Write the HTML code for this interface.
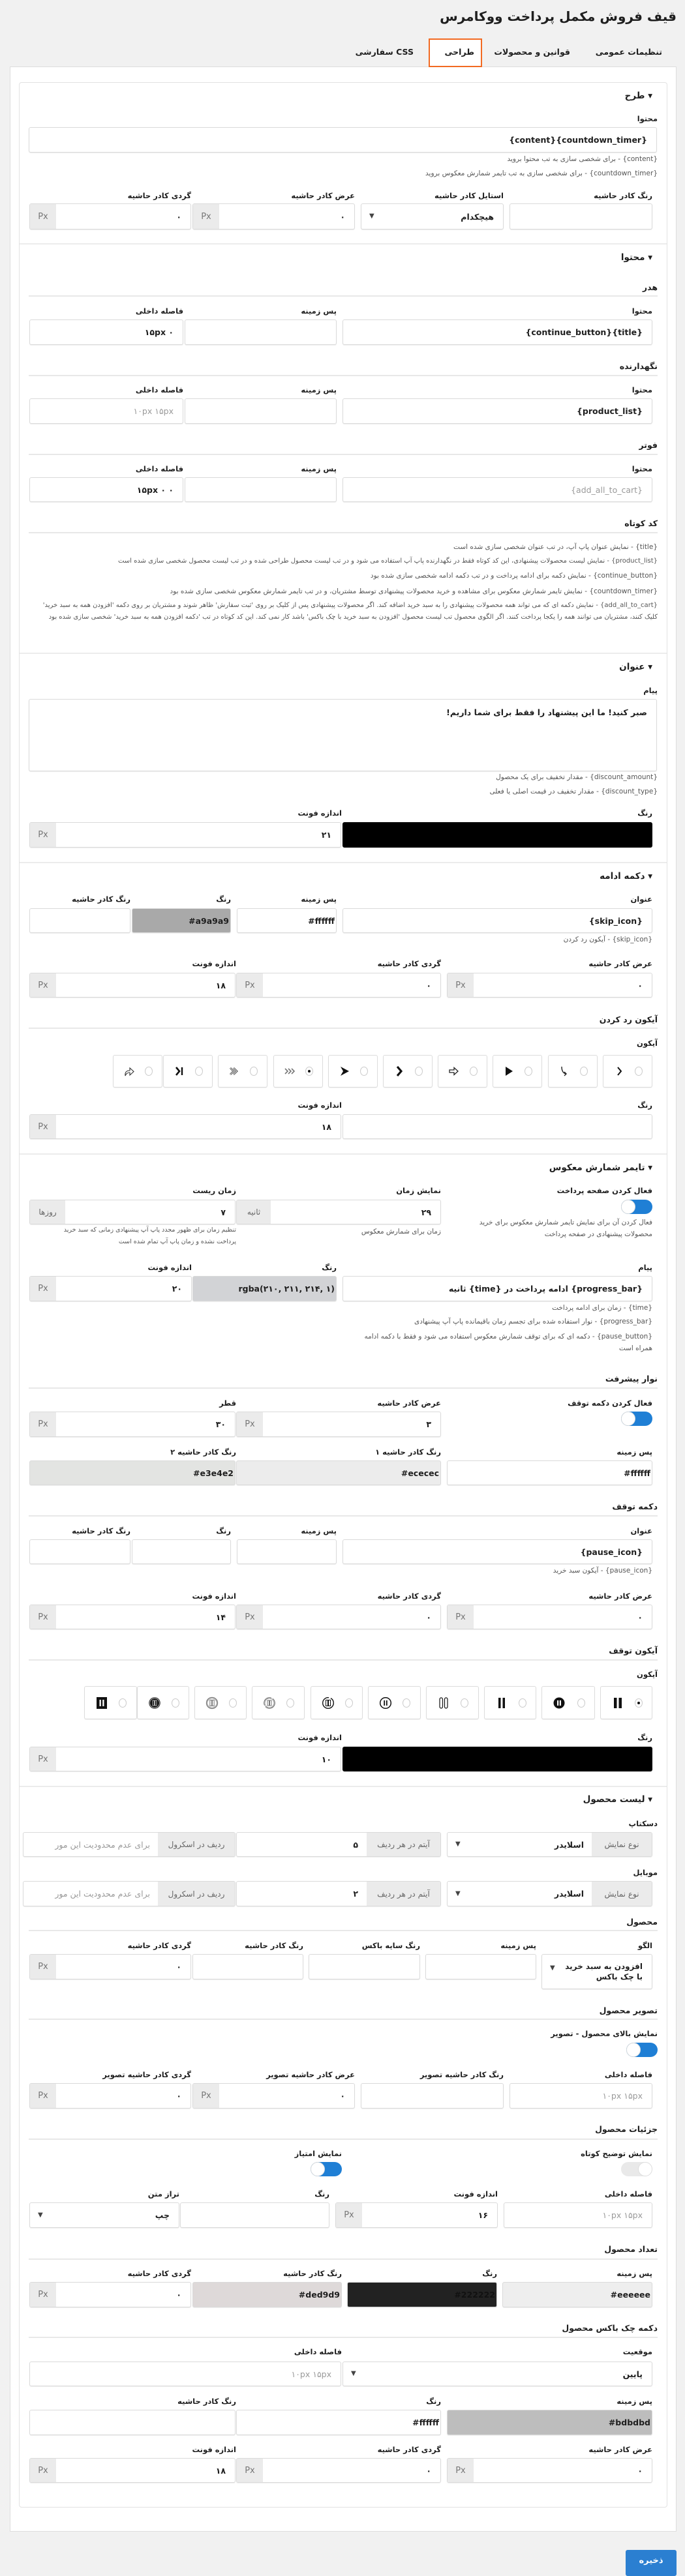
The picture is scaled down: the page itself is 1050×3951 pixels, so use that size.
<!DOCTYPE html>
<html lang="fa" dir="rtl"><head><meta charset="utf-8">
<style>
html,body{margin:0;padding:0}
body{width:1050px;height:3944px;background:#f1f1f1;position:relative;overflow:hidden;font-family:"DejaVu Sans","Liberation Sans",sans-serif;direction:rtl;color:#1e1e1e}
.a{position:absolute}
.t{position:absolute;white-space:nowrap;font-size:11.5px;font-weight:bold;line-height:18px}
.h{position:absolute;white-space:nowrap;font-size:13.5px;font-weight:bold;line-height:20px;right:50px}
.s{position:absolute;white-space:nowrap;font-size:12.5px;font-weight:bold;line-height:18px;right:42px}
.d{position:absolute;white-space:nowrap;font-size:10.5px;color:#555;line-height:16px}
.ln{position:absolute;left:44px;width:964px;height:2px;background:#e8e8e8}
.sep{position:absolute;left:30px;width:992px;height:2px;background:#ececec}
.f{position:absolute;box-sizing:border-box;border:1px solid #dadada;border-radius:3px;background:#fff;box-shadow:0 1px 1px rgba(0,0,0,.07);font-size:12.5px;font-weight:bold;padding-right:14px;display:flex;align-items:center;justify-content:flex-start;white-space:nowrap;overflow:hidden}
.v{direction:ltr;unicode-bidi:isolate}
.ph{color:#9a9a9a;font-weight:normal}
.px{position:absolute;left:0;top:0;bottom:0;width:40px;background:#ebebeb;color:#777;font-weight:normal;font-size:13px;display:flex;align-items:center;justify-content:center;direction:ltr}
.ad{position:absolute;top:0;bottom:0;background:#ebebeb;color:#666;font-weight:normal;font-size:12px;display:flex;align-items:center;justify-content:center}
.ar{position:absolute;left:12px;top:50%;margin-top:-7px;font-size:10px;color:#444;line-height:14px}
.tg{position:absolute;width:48px;height:22px;border-radius:11px;background:#1f7fd5}
.tg::before{content:"";position:absolute;left:0;top:0;width:20px;height:20px;border-radius:50%;background:#fff;border:1px solid #ddd}
.tg.off{background:#e9e9e9}
.tg.off::before{left:auto;right:0}
.ib{position:absolute;box-sizing:border-box;border:1px solid #dcdcdc;border-radius:3px;background:#fff;box-shadow:0 1px 1px rgba(0,0,0,.06)}
.ib svg.i{position:absolute;top:50%;margin-top:-10px;width:20px;height:20px}
.ib .r{position:absolute;top:50%;margin-top:-7px;width:12px;height:14px;border-radius:50%;border:1px solid #ccc;box-sizing:border-box;background:#fff}
.ib .r.on::after{content:"";position:absolute;left:3px;top:4px;width:4px;height:4px;border-radius:50%;background:#111}
</style></head><body>

<div class="a" style="right:13px;top:10px;font-size:20px;font-weight:bold;line-height:30px">قیف فروش مکمل پرداخت ووکامرس</div>

<div class="a" style="left:15px;top:102px;width:1022px;height:1px;background:#ddd"></div>
<div class="a" style="left:657px;top:59px;width:82px;height:44px;box-sizing:border-box;border:2px solid #f26a22;background:#fff"></div>
<div class="t" style="right:35px;top:71px;font-size:12.5px">تنظیمات عمومی</div>
<div class="t" style="right:176px;top:71px;font-size:12.5px">قوانین و محصولات</div>
<div class="t" style="right:323px;top:71px;font-size:12.5px">طراحی</div>
<div class="t" style="right:416px;top:71px;font-size:12.5px">CSS سفارشی</div>

<div class="a" style="left:15px;top:103px;width:1022px;height:3780px;background:#fff;border:1px solid #ddd;box-sizing:border-box;border-top:none"></div>
<div class="a" style="left:29px;top:126px;width:994px;height:3720px;border:1px solid #e2e2e2;border-radius:4px;box-sizing:border-box"></div>

<!-- طرح -->
<div class="h" style="top:137px">▾ طرح</div>
<div class="s" style="top:173px;font-size:11.5px">محتوا</div>
<div class="f" style="left:44px;top:195px;width:963px;height:39px"><span class="v">{content}{countdown_timer}</span></div>
<div class="d" style="right:42px;top:236px">{content} - برای شخصی سازی به تب محتوا بروید</div>
<div class="d" style="right:42px;top:258px">{countdown_timer} - برای شخصی سازی به تب تایمر شمارش معکوس بروید</div>
<div class="t" style="right:50px;top:291px">رنگ کادر حاشیه</div>
<div class="t" style="right:278px;top:291px">استایل کادر حاشیه</div>
<div class="t" style="right:506px;top:291px">عرض کادر حاشیه</div>
<div class="t" style="right:757px;top:291px">گردی کادر حاشیه</div>
<div class="f" style="left:781px;top:312px;width:219px;height:40px"></div>
<div class="f" style="left:553px;top:312px;width:219px;height:40px">هیچکدام<span class="ar">▼</span></div>
<div class="f" style="left:295px;top:312px;width:249px;height:40px">۰<span class="px">Px</span></div>
<div class="f" style="left:45px;top:312px;width:248px;height:40px">۰<span class="px">Px</span></div>

<div class="sep" style="top:373px"></div>
<!-- محتوا -->
<div class="h" style="top:385px">▾ محتوا</div>
<div class="s" style="top:432px">هدر</div><div class="ln" style="top:453px"></div>
<div class="t" style="right:50px;top:468px">محتوا</div>
<div class="t" style="right:534px;top:468px">پس زمینه</div>
<div class="t" style="right:769px;top:468px">فاصله داخلی</div>
<div class="f" style="left:525px;top:490px;width:475px;height:39px"><span class="v">{continue_button}{title}</span></div>
<div class="f" style="left:283px;top:490px;width:233px;height:39px"></div>
<div class="f" style="left:45px;top:490px;width:236px;height:39px"><span class="v">۱۵px ۰</span></div>

<div class="s" style="top:553px">نگهدارنده</div><div class="ln" style="top:575px"></div>
<div class="t" style="right:50px;top:589px">محتوا</div>
<div class="t" style="right:534px;top:589px">پس زمینه</div>
<div class="t" style="right:769px;top:589px">فاصله داخلی</div>
<div class="f" style="left:525px;top:611px;width:475px;height:39px"><span class="v">{product_list}</span></div>
<div class="f" style="left:283px;top:611px;width:233px;height:39px"></div>
<div class="f" style="left:45px;top:611px;width:236px;height:39px"><span class="ph v">۱۰px ۱۵px</span></div>

<div class="s" style="top:674px">فوتر</div><div class="ln" style="top:696px"></div>
<div class="t" style="right:50px;top:710px">محتوا</div>
<div class="t" style="right:534px;top:710px">پس زمینه</div>
<div class="t" style="right:769px;top:710px">فاصله داخلی</div>
<div class="f" style="left:525px;top:732px;width:475px;height:38px"><span class="ph v">{add_all_to_cart}</span></div>
<div class="f" style="left:283px;top:732px;width:233px;height:38px"></div>
<div class="f" style="left:45px;top:732px;width:236px;height:38px"><span class="v">۱۵px ۰ ۰</span></div>

<div class="s" style="top:794px">کد کوتاه</div><div class="ln" style="top:816px"></div>
<div class="d" style="right:42px;top:831px">{title} - نمایش عنوان پاپ آپ، در تب عنوان شخصی سازی شده است</div>
<div class="d" style="right:42px;top:853px;font-size:10px">{product_list} - نمایش لیست محصولات پیشنهادی، این کد کوتاه فقط در نگهدارنده پاپ آپ استفاده می شود و در تب لیست محصول طراحی شده و در تب لیست محصول شخصی سازی شده است</div>
<div class="d" style="right:42px;top:875px">{continue_button} - نمایش دکمه برای ادامه پرداخت و در تب دکمه ادامه شخصی سازی شده بود</div>
<div class="d" style="right:42px;top:899px">{countdown_timer} - نمایش تایمر شمارش معکوس برای مشاهده و خرید محصولات پیشنهادی توسط مشتریان، و در تب تایمر شمارش معکوس شخصی سازی شده بود</div>
<div class="d" style="right:42px;top:920px;width:964px;white-space:normal;line-height:18px;font-size:10px">{add_all_to_cart} - نمایش دکمه ای که می تواند همه محصولات پیشنهادی را به سبد خرید اضافه کند. اگر محصولات پیشنهادی پس از کلیک بر روی 'ثبت سفارش' ظاهر شوند و مشتریان بر روی دکمه 'افزودن همه به سبد خرید' کلیک کنند، مشتریان می توانند همه را یکجا پرداخت کنند. اگر الگوی محصول تب لیست محصول 'افزودن به سبد خرید با چک باکس' باشد کار نمی کند. این کد کوتاه در تب 'دکمه افزودن همه به سبد خرید' شخصی سازی شده بود</div>

<div class="sep" style="top:1001px"></div>
<!-- عنوان -->
<div class="h" style="top:1013px">▾ عنوان</div>
<div class="s" style="top:1050px;font-size:11.5px">پیام</div>
<div class="f" style="left:44px;top:1072px;width:963px;height:111px;align-items:flex-start;padding-top:12px">صبر کنید! ما این پیشنهاد را فقط برای شما داریم!</div>
<div class="d" style="right:42px;top:1184px">{discount_amount} - مقدار تخفیف برای یک محصول</div>
<div class="d" style="right:42px;top:1206px">{discount_type} - مقدار تخفیف در قیمت اصلی یا فعلی</div>
<div class="t" style="right:50px;top:1238px">رنگ</div>
<div class="t" style="right:526px;top:1238px">اندازه فونت</div>
<div class="f" style="left:525px;top:1261px;width:475px;height:39px;background:#000;border-color:#000"></div>
<div class="f" style="left:45px;top:1261px;width:478px;height:39px">۲۱<span class="px">Px</span></div>

<div class="sep" style="top:1322px"></div>
<!-- دکمه ادامه -->
<div class="h" style="top:1334px">▾ دکمه ادامه</div>
<div class="t" style="right:50px;top:1370px">عنوان</div>
<div class="t" style="right:534px;top:1370px">پس زمینه</div>
<div class="t" style="right:696px;top:1370px">رنگ</div>
<div class="t" style="right:850px;top:1370px">رنگ کادر حاشیه</div>
<div class="f" style="left:525px;top:1393px;width:475px;height:38px"><span class="v">{skip_icon}</span></div>
<div class="f" style="left:363px;top:1393px;width:153px;height:38px;padding-right:2px"><span class="v">#ffffff</span></div>
<div class="f" style="left:202px;top:1393px;width:152px;height:38px;padding-right:2px;background:#a9a9a9"><span class="v">#a9a9a9</span></div>
<div class="f" style="left:45px;top:1393px;width:155px;height:38px"></div>
<div class="d" style="right:50px;top:1433px">{skip_icon} - آیکون رد کردن</div>
<div class="t" style="right:50px;top:1469px">عرض کادر حاشیه</div>
<div class="t" style="right:374px;top:1469px">گردی کادر حاشیه</div>
<div class="t" style="right:688px;top:1469px">اندازه فونت</div>
<div class="f" style="left:685px;top:1492px;width:315px;height:38px">۰<span class="px">Px</span></div>
<div class="f" style="left:362px;top:1492px;width:314px;height:38px">۰<span class="px">Px</span></div>
<div class="f" style="left:45px;top:1492px;width:316px;height:38px">۱۸<span class="px">Px</span></div>

<div class="s" style="top:1555px">آیکون رد کردن</div><div class="ln" style="top:1576px"></div>
<div class="s" style="top:1591px;font-size:11.5px">آیکون</div>

<div class="ib" style="left:924px;top:1618px;width:76px;height:50px"><svg class="i" style="left:14px" viewBox="0 0 20 20"><path d="M8 4 L13 10 L8 16" stroke="#111" stroke-width="2" fill="none"/></svg><span class="r" style="left:48px"></span></div>
<div class="ib" style="left:840px;top:1618px;width:76px;height:50px"><svg class="i" style="left:14px" viewBox="0 0 20 20"><path d="M6 3 Q6 12 12 14 M10 11 L13 14 L10 17" stroke="#222" stroke-width="1.4" fill="none"/></svg><span class="r" style="left:48px"></span></div>
<div class="ib" style="left:755px;top:1618px;width:76px;height:50px"><svg class="i" style="left:14px" viewBox="0 0 20 20"><path d="M5 3 L16 10 L5 17 Z" fill="#111"/></svg><span class="r" style="left:48px"></span></div>
<div class="ib" style="left:671px;top:1618px;width:76px;height:50px"><svg class="i" style="left:14px" viewBox="0 0 20 20"><path d="M3 8 H10 V4.5 L16 10 L10 15.5 V12 H3 Z" stroke="#222" stroke-width="1.3" fill="none"/></svg><span class="r" style="left:48px"></span></div>
<div class="ib" style="left:587px;top:1618px;width:76px;height:50px"><svg class="i" style="left:14px" viewBox="0 0 20 20"><path d="M7 3 L13 10 L7 17" stroke="#111" stroke-width="3.2" fill="none"/></svg><span class="r" style="left:48px"></span></div>
<div class="ib" style="left:503px;top:1618px;width:76px;height:50px"><svg class="i" style="left:14px" viewBox="0 0 20 20"><path d="M4 3 L17 10 L4 17 L8 10 Z" fill="#111"/></svg><span class="r" style="left:48px"></span></div>
<div class="ib" style="left:419px;top:1618px;width:76px;height:50px"><svg class="i" style="left:14px" viewBox="0 0 20 20"><path d="M3 6 L7 10 L3 14 M8 6 L12 10 L8 14 M13 6 L17 10 L13 14" stroke="#777" stroke-width="1.6" fill="none"/></svg><span class="r on" style="left:48px"></span></div>
<div class="ib" style="left:334px;top:1618px;width:76px;height:50px"><svg class="i" style="left:14px" viewBox="0 0 20 20"><path d="M4 5 L9 10 L4 15 M9 5 L14 10 L9 15" stroke="#222" stroke-width="2.6" fill="none"/><path d="M4 5 L9 10 L4 15 M9 5 L14 10 L9 15" stroke="#fff" stroke-width="1" fill="none"/></svg><span class="r" style="left:48px"></span></div>
<div class="ib" style="left:250px;top:1618px;width:76px;height:50px"><svg class="i" style="left:14px" viewBox="0 0 20 20"><path d="M5 4 L10 10 L5 16" stroke="#111" stroke-width="2.6" fill="none"/><path d="M14 4 V16" stroke="#111" stroke-width="2.4"/></svg><span class="r" style="left:48px"></span></div>
<div class="ib" style="left:173px;top:1618px;width:76px;height:50px"><svg class="i" style="left:14px" viewBox="0 0 20 20"><path d="M4 17 Q3 9 11 9 V5 L17 10.5 L11 16 V12 Q6 12 4 17 Z" stroke="#333" stroke-width="1.1" fill="none"/></svg><span class="r" style="left:48px"></span></div>

<div class="t" style="right:50px;top:1686px">رنگ</div>
<div class="t" style="right:526px;top:1686px">اندازه فونت</div>
<div class="f" style="left:525px;top:1709px;width:475px;height:38px"></div>
<div class="f" style="left:45px;top:1709px;width:478px;height:38px">۱۸<span class="px">Px</span></div>

<div class="sep" style="top:1769px"></div>
<!-- تایمر -->
<div class="h" style="top:1781px">▾ تایمر شمارش معکوس</div>
<div class="t" style="right:50px;top:1817px">فعال کردن صفحه پرداخت</div>
<div class="t" style="right:374px;top:1817px">نمایش زمان</div>
<div class="t" style="right:688px;top:1817px">زمان ریست</div>
<div class="tg" style="left:952px;top:1840px"></div>
<div class="f" style="left:362px;top:1840px;width:314px;height:38px">۲۹<span class="ad" style="left:0;width:52px">ثانیه</span></div>
<div class="f" style="left:45px;top:1840px;width:316px;height:38px">۷<span class="ad" style="left:0;width:54px">روزها</span></div>
<div class="d" style="right:50px;top:1867px">فعال کردن آن برای نمایش تایمر شمارش معکوس برای خرید</div>
<div class="d" style="right:50px;top:1885px">محصولات پیشنهادی در صفحه پرداخت</div>
<div class="d" style="right:374px;top:1881px">زمان برای شمارش معکوس</div>
<div class="d" style="right:688px;top:1879px;font-size:9.5px">تنظیم زمان برای ظهور مجدد پاپ آپ پیشنهادی زمانی که سبد خرید</div>
<div class="d" style="right:688px;top:1897px;font-size:9.5px">پرداخت نشده و زمان پاپ آپ تمام شده است</div>
<div class="t" style="right:50px;top:1935px">پیام</div>
<div class="t" style="right:534px;top:1935px">رنگ</div>
<div class="t" style="right:756px;top:1935px">اندازه فونت</div>
<div class="f" style="left:525px;top:1957px;width:475px;height:39px">{progress_bar} ادامه پرداخت در {time} ثانیه</div>
<div class="f" style="left:295px;top:1957px;width:221px;height:39px;padding-right:2px;background:#d2d3d6"><span class="v">rgba(۲۱۰, ۲۱۱, ۲۱۴, ۱)</span></div>
<div class="f" style="left:45px;top:1957px;width:249px;height:39px">۲۰<span class="px">Px</span></div>
<div class="d" style="right:50px;top:1998px">{time} - زمان برای ادامه پرداخت</div>
<div class="d" style="right:50px;top:2019px">{progress_bar} - نوار استفاده شده برای تجسم زمان باقیمانده پاپ آپ پیشنهادی</div>
<div class="d" style="right:50px;top:2042px">{pause_button} - دکمه ای که برای توقف شمارش معکوس استفاده می شود و فقط با دکمه ادامه</div>
<div class="d" style="right:50px;top:2060px">همراه است</div>

<div class="s" style="top:2106px">نوار پیشرفت</div><div class="ln" style="top:2128px"></div>
<div class="t" style="right:50px;top:2143px">فعال کردن دکمه توقف</div>
<div class="t" style="right:374px;top:2143px">عرض کادر حاشیه</div>
<div class="t" style="right:688px;top:2143px">قطر</div>
<div class="tg" style="left:952px;top:2165px"></div>
<div class="f" style="left:362px;top:2165px;width:314px;height:39px">۳<span class="px">Px</span></div>
<div class="f" style="left:45px;top:2165px;width:316px;height:39px">۳۰<span class="px">Px</span></div>
<div class="t" style="right:50px;top:2218px">پس زمینه</div>
<div class="t" style="right:374px;top:2218px">رنگ کادر حاشیه ۱</div>
<div class="t" style="right:688px;top:2218px">رنگ کادر حاشیه ۲</div>
<div class="f" style="left:685px;top:2240px;width:315px;height:38px;padding-right:2px"><span class="v">#ffffff</span></div>
<div class="f" style="left:362px;top:2240px;width:314px;height:38px;padding-right:2px;background:#ececec"><span class="v">#ececec</span></div>
<div class="f" style="left:45px;top:2240px;width:316px;height:38px;padding-right:2px;background:#e3e4e2"><span class="v">#e3e4e2</span></div>

<div class="s" style="top:2302px">دکمه توقف</div><div class="ln" style="top:2324px"></div>
<div class="t" style="right:50px;top:2339px">عنوان</div>
<div class="t" style="right:534px;top:2339px">پس زمینه</div>
<div class="t" style="right:696px;top:2339px">رنگ</div>
<div class="t" style="right:850px;top:2339px">رنگ کادر حاشیه</div>
<div class="f" style="left:525px;top:2361px;width:475px;height:38px"><span class="v">{pause_icon}</span></div>
<div class="f" style="left:363px;top:2361px;width:153px;height:38px"></div>
<div class="f" style="left:202px;top:2361px;width:152px;height:38px"></div>
<div class="f" style="left:45px;top:2361px;width:155px;height:38px"></div>
<div class="d" style="right:50px;top:2401px">{pause_icon} - آیکون سبد خرید</div>
<div class="t" style="right:50px;top:2439px">عرض کادر حاشیه</div>
<div class="t" style="right:374px;top:2439px">گردی کادر حاشیه</div>
<div class="t" style="right:688px;top:2439px">اندازه فونت</div>
<div class="f" style="left:685px;top:2461px;width:315px;height:38px">۰<span class="px">Px</span></div>
<div class="f" style="left:362px;top:2461px;width:314px;height:38px">۰<span class="px">Px</span></div>
<div class="f" style="left:45px;top:2461px;width:316px;height:38px">۱۴<span class="px">Px</span></div>

<div class="s" style="top:2523px">آیکون توقف</div><div class="ln" style="top:2545px"></div>
<div class="s" style="top:2559px;font-size:11.5px">آیکون</div>

<div class="ib" style="left:920px;top:2586px;width:80px;height:51px"><svg class="i" style="left:16px" viewBox="0 0 20 20"><rect x="4" y="2" width="4.5" height="16" fill="#111"/><rect x="11.5" y="2" width="4.5" height="16" fill="#111"/></svg><span class="r on" style="left:52px"></span></div>
<div class="ib" style="left:830px;top:2586px;width:82px;height:51px"><svg class="i" style="left:16px" viewBox="0 0 20 20"><circle cx="10" cy="10" r="8.5" fill="#111"/><rect x="7" y="6" width="2.2" height="8" fill="#fff"/><rect x="10.8" y="6" width="2.2" height="8" fill="#fff"/></svg><span class="r" style="left:54px"></span></div>
<div class="ib" style="left:742px;top:2586px;width:80px;height:51px"><svg class="i" style="left:16px" viewBox="0 0 20 20"><rect x="5" y="2" width="3.5" height="16" fill="#111"/><rect x="11.5" y="2" width="3.5" height="16" fill="#111"/></svg><span class="r" style="left:52px"></span></div>
<div class="ib" style="left:653px;top:2586px;width:81px;height:51px"><svg class="i" style="left:16px" viewBox="0 0 20 20"><rect x="4" y="2" width="4.5" height="16" rx="2.2" stroke="#111" stroke-width="1.2" fill="none"/><rect x="11.5" y="2" width="4.5" height="16" rx="2.2" stroke="#111" stroke-width="1.2" fill="none"/></svg><span class="r" style="left:52px"></span></div>
<div class="ib" style="left:564px;top:2586px;width:81px;height:51px"><svg class="i" style="left:16px" viewBox="0 0 20 20"><circle cx="10" cy="10" r="8.3" stroke="#111" stroke-width="1.5" fill="none"/><rect x="7.3" y="6" width="1.8" height="8" fill="#111"/><rect x="10.9" y="6" width="1.8" height="8" fill="#111"/></svg><span class="r" style="left:52px"></span></div>
<div class="ib" style="left:476px;top:2586px;width:80px;height:51px"><svg class="i" style="left:16px" viewBox="0 0 20 20"><circle cx="10" cy="10" r="8.3" stroke="#111" stroke-width="1.4" stroke-dasharray="40 3" fill="none"/><rect x="6.5" y="5.5" width="3" height="9" stroke="#111" stroke-width="1" fill="none"/><rect x="10.5" y="5.5" width="3" height="9" stroke="#111" stroke-width="1" fill="none"/></svg><span class="r" style="left:52px"></span></div>
<div class="ib" style="left:386px;top:2586px;width:81px;height:51px"><svg class="i" style="left:16px" viewBox="0 0 20 20"><circle cx="10" cy="10" r="8.3" stroke="#666" stroke-width="1" stroke-dasharray="20 2" fill="none"/><circle cx="10" cy="10" r="7" stroke="#888" stroke-width=".8" fill="none"/><rect x="7" y="6" width="2.5" height="8" stroke="#555" stroke-width=".8" fill="none"/><rect x="10.5" y="6" width="2.5" height="8" stroke="#555" stroke-width=".8" fill="none"/></svg><span class="r" style="left:52px"></span></div>
<div class="ib" style="left:298px;top:2586px;width:80px;height:51px"><svg class="i" style="left:16px" viewBox="0 0 20 20"><circle cx="10" cy="10" r="8.5" stroke="#777" stroke-width="1.3" fill="none"/><circle cx="10" cy="10" r="7" stroke="#999" stroke-width=".8" fill="none"/><rect x="6.8" y="5.5" width="2.6" height="9" stroke="#777" stroke-width="1" fill="none"/><rect x="10.6" y="5.5" width="2.6" height="9" stroke="#777" stroke-width="1" fill="none"/></svg><span class="r" style="left:52px"></span></div>
<div class="ib" style="left:210px;top:2586px;width:80px;height:51px"><svg class="i" style="left:16px" viewBox="0 0 20 20"><circle cx="10" cy="10" r="8.8" fill="#333"/><circle cx="10" cy="10" r="7.3" stroke="#bbb" stroke-width=".8" fill="#111"/><rect x="7" y="6" width="2.4" height="8" stroke="#ddd" stroke-width=".8" fill="none"/><rect x="10.6" y="6" width="2.4" height="8" stroke="#ddd" stroke-width=".8" fill="none"/></svg><span class="r" style="left:52px"></span></div>
<div class="ib" style="left:129px;top:2586px;width:81px;height:51px"><svg class="i" style="left:16px" viewBox="0 0 20 20"><rect x="2" y="1" width="16" height="18" fill="#111"/><rect x="6.5" y="5" width="2.3" height="10" fill="#fff"/><rect x="11.2" y="5" width="2.3" height="10" fill="#fff"/></svg><span class="r" style="left:52px"></span></div>

<div class="t" style="right:50px;top:2656px">رنگ</div>
<div class="t" style="right:526px;top:2656px">اندازه فونت</div>
<div class="f" style="left:525px;top:2679px;width:475px;height:38px;background:#000;border-color:#000"></div>
<div class="f" style="left:45px;top:2679px;width:478px;height:38px">۱۰<span class="px">Px</span></div>

<div class="sep" style="top:2739px"></div>
<!-- لیست محصول -->
<div class="h" style="top:2750px">▾ لیست محصول</div>
<div class="s" style="top:2788px;font-size:11.5px">دسکتاپ</div>
<div class="f" style="left:685px;top:2810px;width:315px;height:38px;padding-right:104px">اسلایدر<span class="ad" style="right:0;width:92px">نوع نمایش</span><span class="ar">▼</span></div>
<div class="f" style="left:362px;top:2810px;width:314px;height:38px;padding-right:126px">۵<span class="ad" style="right:0;width:113px">آیتم در هر ردیف</span></div>
<div class="f" style="left:35px;top:2810px;width:326px;height:38px;padding-right:130px"><span class="ph">برای عدم محدودیت این مور</span><span class="ad" style="right:0;width:118px">ردیف در اسکرول</span></div>
<div class="s" style="top:2863px;font-size:11.5px">موبایل</div>
<div class="f" style="left:685px;top:2885px;width:315px;height:39px;padding-right:104px">اسلایدر<span class="ad" style="right:0;width:92px">نوع نمایش</span><span class="ar">▼</span></div>
<div class="f" style="left:362px;top:2885px;width:314px;height:39px;padding-right:126px">۲<span class="ad" style="right:0;width:113px">آیتم در هر ردیف</span></div>
<div class="f" style="left:35px;top:2885px;width:326px;height:39px;padding-right:130px"><span class="ph">برای عدم محدودیت این مور</span><span class="ad" style="right:0;width:118px">ردیف در اسکرول</span></div>

<div class="s" style="top:2939px">محصول</div><div class="ln" style="top:2960px"></div>
<div class="t" style="right:50px;top:2975px">الگو</div>
<div class="t" style="right:228px;top:2975px">پس زمینه</div>
<div class="t" style="right:406px;top:2975px">رنگ سایه باکس</div>
<div class="t" style="right:585px;top:2975px">رنگ کادر حاشیه</div>
<div class="t" style="right:757px;top:2975px">گردی کادر حاشیه</div>
<div class="f" style="left:830px;top:2997px;width:170px;height:54px;white-space:normal;line-height:16px;padding-left:34px;font-size:12px">افزودن به سبد خرید با چک باکس<span class="ar" style="margin-top:-12px">▼</span></div>
<div class="f" style="left:652px;top:2997px;width:170px;height:39px"></div>
<div class="f" style="left:473px;top:2997px;width:171px;height:39px"></div>
<div class="f" style="left:295px;top:2997px;width:170px;height:39px"></div>
<div class="f" style="left:45px;top:2997px;width:248px;height:39px">۰<span class="px">Px</span></div>

<div class="s" style="top:3075px">تصویر محصول</div><div class="ln" style="top:3096px"></div>
<div class="s" style="top:3110px;font-size:11.5px">نمایش بالای محصول - تصویر</div>
<div class="tg" style="left:960px;top:3133px"></div>
<div class="t" style="right:50px;top:3173px">فاصله داخلی</div>
<div class="t" style="right:278px;top:3173px">رنگ کادر حاشیه تصویر</div>
<div class="t" style="right:506px;top:3173px">عرض کادر حاشیه تصویر</div>
<div class="t" style="right:757px;top:3173px">گردی کادر حاشیه تصویر</div>
<div class="f" style="left:781px;top:3195px;width:219px;height:39px"><span class="ph v">۱۰px ۱۵px</span></div>
<div class="f" style="left:553px;top:3195px;width:219px;height:39px"></div>
<div class="f" style="left:295px;top:3195px;width:249px;height:39px">۰<span class="px">Px</span></div>
<div class="f" style="left:45px;top:3195px;width:248px;height:39px">۰<span class="px">Px</span></div>

<div class="s" style="top:3257px">جزئیات محصول</div><div class="ln" style="top:3280px"></div>
<div class="t" style="right:50px;top:3294px">نمایش توضیح کوتاه</div>
<div class="t" style="right:526px;top:3294px">نمایش امتیاز</div>
<div class="tg off" style="left:952px;top:3316px"></div>
<div class="tg" style="left:476px;top:3316px"></div>
<div class="t" style="right:50px;top:3356px">فاصله داخلی</div>
<div class="t" style="right:287px;top:3356px">اندازه فونت</div>
<div class="t" style="right:545px;top:3356px">رنگ</div>
<div class="t" style="right:775px;top:3356px">تراز متن</div>
<div class="f" style="left:772px;top:3378px;width:228px;height:39px"><span class="ph v">۱۰px ۱۵px</span></div>
<div class="f" style="left:514px;top:3378px;width:249px;height:39px">۱۶<span class="px">Px</span></div>
<div class="f" style="left:276px;top:3378px;width:229px;height:39px"></div>
<div class="f" style="left:45px;top:3378px;width:230px;height:39px">چپ<span class="ar">▼</span></div>

<div class="s" style="top:3441px">تعداد محصول</div><div class="ln" style="top:3464px"></div>
<div class="t" style="right:50px;top:3478px">پس زمینه</div>
<div class="t" style="right:288px;top:3478px">رنگ</div>
<div class="t" style="right:526px;top:3478px">رنگ کادر حاشیه</div>
<div class="t" style="right:757px;top:3478px">گردی کادر حاشیه</div>
<div class="f" style="left:770px;top:3500px;width:230px;height:39px;padding-right:2px;background:#eeeeee"><span class="v">#eeeeee</span></div>
<div class="f" style="left:532px;top:3500px;width:230px;height:39px;padding-right:2px;background:#222;color:#111"><span class="v">#222222</span></div>
<div class="f" style="left:295px;top:3500px;width:229px;height:39px;padding-right:2px;background:#ded9d9"><span class="v">#ded9d9</span></div>
<div class="f" style="left:45px;top:3500px;width:248px;height:39px">۰<span class="px">Px</span></div>

<div class="s" style="top:3562px">دکمه چک باکس محصول</div><div class="ln" style="top:3584px"></div>
<div class="t" style="right:50px;top:3598px">موقعیت</div>
<div class="t" style="right:526px;top:3598px">فاصله داخلی</div>
<div class="f" style="left:525px;top:3622px;width:475px;height:38px">پایین<span class="ar">▼</span></div>
<div class="f" style="left:45px;top:3622px;width:478px;height:38px"><span class="ph v">۱۰px ۱۵px</span></div>
<div class="t" style="right:50px;top:3674px">پس زمینه</div>
<div class="t" style="right:374px;top:3674px">رنگ</div>
<div class="t" style="right:688px;top:3674px">رنگ کادر حاشیه</div>
<div class="f" style="left:685px;top:3696px;width:315px;height:39px;padding-right:2px;background:#bdbdbd"><span class="v">#bdbdbd</span></div>
<div class="f" style="left:362px;top:3696px;width:314px;height:39px;padding-right:2px"><span class="v">#ffffff</span></div>
<div class="f" style="left:45px;top:3696px;width:316px;height:39px"></div>
<div class="t" style="right:50px;top:3748px">عرض کادر حاشیه</div>
<div class="t" style="right:374px;top:3748px">گردی کادر حاشیه</div>
<div class="t" style="right:688px;top:3748px">اندازه فونت</div>
<div class="f" style="left:685px;top:3770px;width:315px;height:38px">۰<span class="px">Px</span></div>
<div class="f" style="left:362px;top:3770px;width:314px;height:38px">۰<span class="px">Px</span></div>
<div class="f" style="left:45px;top:3770px;width:316px;height:38px">۱۸<span class="px">Px</span></div>

<div class="a" style="left:959px;top:3911px;width:78px;height:40px;background:#2b7fd1;border-radius:3px;color:#fff;font-size:13px;font-weight:bold;text-align:center;line-height:34px">ذخیره</div>
</body></html>
